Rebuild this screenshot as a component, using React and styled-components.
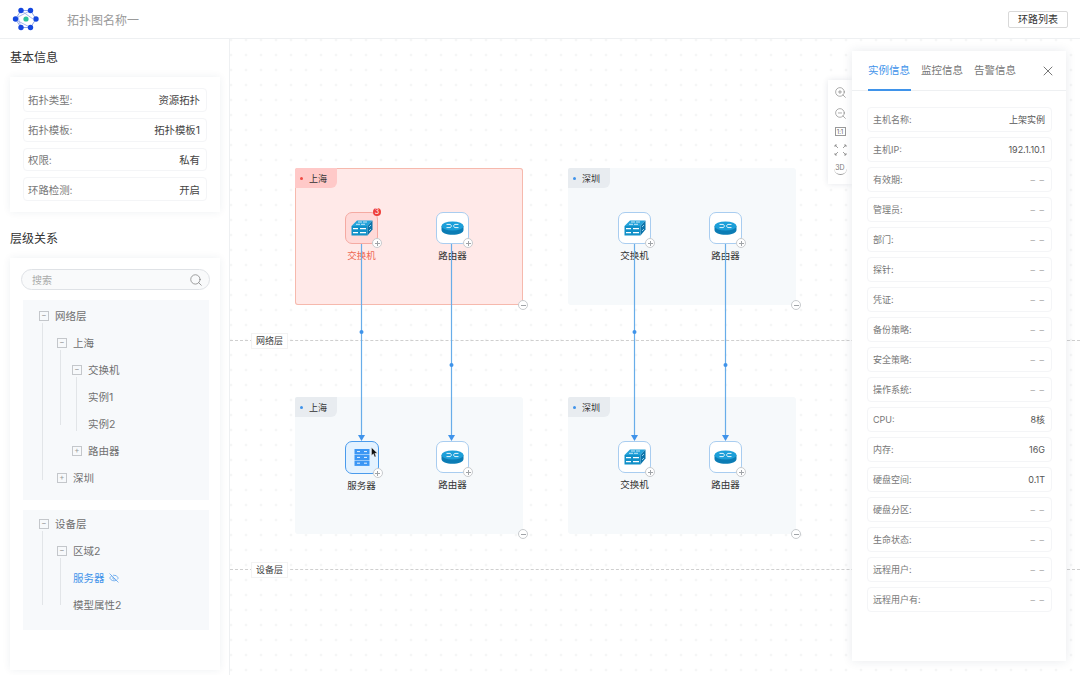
import React from 'react'
import styled, { createGlobalStyle } from 'styled-components'
import { ZoomIn, ZoomOut, X, Search, EyeOff } from 'lucide-react'

const basicInfo = [
  ['拓扑类型:', '资源拓扑'],
  ['拓扑模板:', '拓扑模板1'],
  ['权限:', '私有'],
  ['环路检测:', '开启'],
]

const instanceInfo = [
  ['主机名称:', '上架实例'],
  ['主机IP:', '192.1.10.1'],
  ['有效期:', '– –'],
  ['管理员:', '– –'],
  ['部门:', '– –'],
  ['探针:', '– –'],
  ['凭证:', '– –'],
  ['备份策略:', '– –'],
  ['安全策略:', '– –'],
  ['操作系统:', '– –'],
  ['CPU:', '8核'],
  ['内存:', '16G'],
  ['硬盘空间:', '0.1T'],
  ['硬盘分区:', '– –'],
  ['生命状态:', '– –'],
  ['远程用户:', '– –'],
  ['远程用户有:', '– –'],
]

const groups = [
  { name: '上海', x: 65, y: 129, alert: true, nodes: [{ kind: 'switch', label: '交换机', alert: true }, { kind: 'router', label: '路由器' }] },
  { name: '深圳', x: 338, y: 129, nodes: [{ kind: 'switch', label: '交换机' }, { kind: 'router', label: '路由器' }] },
  { name: '上海', x: 65, y: 358, nodes: [{ kind: 'server', label: '服务器', selected: true }, { kind: 'router', label: '路由器' }] },
  { name: '深圳', x: 338, y: 358, nodes: [{ kind: 'switch', label: '交换机' }, { kind: 'router', label: '路由器' }] },
]

const edges = [
  { x: 131.5, dot: 293 },
  { x: 221.5, dot: 326 },
  { x: 404.5, dot: 293 },
  { x: 495.5, dot: 326 },
]

export default function App() {
  return (
    <>
      <GlobalStyle />
      <Page>
        <Header>
          <HeaderLeft>
            <Logo />
            <MapTitle>拓扑图名称一</MapTitle>
          </HeaderLeft>
          <LoopButton>环路列表</LoopButton>
        </Header>
        <Body>
          <Sidebar>
            <SectionTitle>基本信息</SectionTitle>
            <InfoCard>
              {basicInfo.map(([k, v]) => (
                <InfoRow key={k}>
                  <InfoLabel>{k}</InfoLabel>
                  <InfoValue>{v}</InfoValue>
                </InfoRow>
              ))}
            </InfoCard>
            <SectionTitle $spaced>层级关系</SectionTitle>
            <TreeCard>
              <SearchBox>
                <span>搜索</span>
                <Search size={14} strokeWidth={1.2} color="#777" />
              </SearchBox>
              <TreePanel $top={2} $bottom={9}>
                <TreeRow $depth={0} $open>网络层</TreeRow>
                <TreeGroup $left={19} $bottom={11}>
                  <TreeRow $depth={1} $open>上海</TreeRow>
                  <TreeGroup $left={37} $bottom={39}>
                    <TreeRow $depth={2} $open>交换机</TreeRow>
                    <TreeGroup $left={53} $bottom={6}>
                      <TreeRow $depth={2} $leaf>实例1</TreeRow>
                      <TreeRow $depth={2} $leaf>实例2</TreeRow>
                    </TreeGroup>
                    <TreeRow $depth={2}>路由器</TreeRow>
                  </TreeGroup>
                  <TreeRow $depth={1}>深圳</TreeRow>
                </TreeGroup>
              </TreePanel>
              <TreePanel $top={0} $bottom={12}>
                <TreeRow $depth={0} $open>设备层</TreeRow>
                <TreeGroup $left={19} $bottom={13}>
                  <TreeRow $depth={1} $open>区域2</TreeRow>
                  <TreeGroup $left={37} $bottom={13}>
                    <TreeRow $depth={1} $leaf $active>
                      服务器
                      <EyeOff size={10} strokeWidth={1.6} />
                    </TreeRow>
                    <TreeRow $depth={1} $leaf>模型属性2</TreeRow>
                  </TreeGroup>
                </TreeGroup>
              </TreePanel>
            </TreeCard>
          </Sidebar>

          <Canvas>
            <LayerLine $y={294}><LayerTag>网络层</LayerTag></LayerLine>
            <LayerLine $y={523}><LayerTag>设备层</LayerTag></LayerLine>

            {groups.map((g, i) => (
              <Group key={i} $x={g.x} $y={g.y} $alert={g.alert}>
                <GroupTag $alert={g.alert}>
                  <GroupDot $alert={g.alert} />
                  {g.name}
                </GroupTag>
                {g.nodes.map((n) => (
                  <Node key={n.label}>
                    <NodeBox $alert={n.alert} $selected={n.selected}>
                      {n.kind === 'switch' && <SwitchIcon />}
                      {n.kind === 'router' && <RouterIcon />}
                      {n.kind === 'server' && <ServerIcon />}
                      {n.alert && <AlertBadge>3</AlertBadge>}
                      {n.selected && <Cursor />}
                      <RoundToggle $plus />
                    </NodeBox>
                    <NodeLabel $alert={n.alert}>{n.label}</NodeLabel>
                  </Node>
                ))}
                <RoundToggle />
              </Group>
            ))}

            <EdgeLayer width="850" height="636">
              {edges.map((e) => (
                <g key={e.x}>
                  <line x1={e.x} x2={e.x} y1="205" y2="398" stroke="#68ade9" strokeWidth="1.2" />
                  <circle cx={e.x} cy={e.dot} r="2" fill="#3f93ea" />
                  <path d={`M${e.x - 3.5} 396 L${e.x + 3.5} 396 L${e.x} 402 Z`} fill="#3f93ea" />
                </g>
              ))}
            </EdgeLayer>

            <ToolBar>
              <ZoomIn size={13} strokeWidth={1.1} />
              <ZoomOut size={13} strokeWidth={1.1} />
              <RatioBox>1:1</RatioBox>
              <FitIcon />
              <ThreeD>3D</ThreeD>
            </ToolBar>

            <DetailPanel>
              <Tabs>
                <Tab $active>实例信息</Tab>
                <Tab>监控信息</Tab>
                <Tab>告警信息</Tab>
                <CloseButton><X size={16} strokeWidth={1.1} /></CloseButton>
              </Tabs>
              <DetailList>
                {instanceInfo.map(([k, v]) => (
                  <DetailRow key={k}>
                    <DetailLabel>{k}</DetailLabel>
                    <DetailValue $empty={v === '– –'}>{v}</DetailValue>
                  </DetailRow>
                ))}
              </DetailList>
            </DetailPanel>
          </Canvas>
        </Body>
      </Page>
    </>
  )
}

function Logo() {
  const outer = [[21, 10.5], [30.5, 10.5], [36, 19], [30.5, 27.5], [21, 27.5], [15.5, 19]]
  return (
    <svg width="52" height="38" viewBox="0 0 52 38">
      <path d="M21 10.5H30.5L36 19L30.5 27.5H21L15.5 19Z" fill="none" stroke="#7f9ce8" strokeWidth=".9" />
      <path d="M30.5 10.5L18 17L21 27.5M21 10.5L33 19M18 21L30.5 27.5" fill="none" stroke="#9db2ec" strokeWidth=".9" />
      {outer.map(([x, y]) => <circle key={x + '-' + y} cx={x} cy={y} r="2.7" fill="#1447e0" />)}
      <circle cx="26" cy="19" r="2.6" fill="#2cc39a" />
    </svg>
  )
}

function SwitchIcon() {
  return (
    <svg width="22" height="16" viewBox="0 0 22 16">
      <path d="M6 .5H21.5L16.5 6H.5Z" fill="#25a3da" />
      <path d="M.5 6H16.5V15.5H.5Z" fill="#1190c8" />
      <path d="M16.5 6L21.5 .5V9.5L16.5 15.5Z" fill="#0b74aa" />
      <path d="M7 2H11M12 2H16M5 4.3H9M10 4.3H14" stroke="#d8f1fb" strokeWidth=".9" />
      <path d="M2 8.6H7M9 8.6H15M2 12.6H7M9 12.6H15" stroke="#fff" strokeWidth="1.2" />
      <path d="M18 7L20 5M18 11L20 9" stroke="#bfe6f7" strokeWidth=".8" />
    </svg>
  )
}

function RouterIcon() {
  return (
    <svg width="23" height="14" viewBox="0 0 23 14">
      <path d="M.5 5V9C.5 11.8 5.4 13.8 11.5 13.8S22.5 11.8 22.5 9V5Z" fill="#0b7cb4" />
      <ellipse cx="11.5" cy="5" rx="11" ry="4.6" fill="#1c9fd9" />
      <path d="M5.5 3.4H9L10.6 4.6M17.5 3.4H14L12.4 4.6M5.5 6.6H9L10.6 5.4M17.5 6.6H14L12.4 5.4" fill="none" stroke="#fff" strokeWidth=".9" />
    </svg>
  )
}

function ServerIcon() {
  return (
    <svg width="16" height="17" viewBox="0 0 16 17">
      {[0, 5.8, 11.6].map((y) => (
        <g key={y}>
          <rect x=".5" y={y} width="15" height="5.3" fill="#3b96f4" />
          <path d={`M3 ${y + 2.6}H6M10 ${y + 2.6}H13`} stroke="#fff" strokeWidth=".9" />
        </g>
      ))}
    </svg>
  )
}

function Cursor() {
  return (
    <CursorArrow width="7" height="11" viewBox="0 0 7 11">
      <path d="M.5 .5V8.5L2.4 6.8L3.6 10L5 9.4L3.8 6.3H6.4Z" fill="#111" stroke="#fff" strokeWidth=".4" />
    </CursorArrow>
  )
}

function FitIcon() {
  return (
    <svg width="13" height="12" viewBox="0 0 13 12" fill="none" stroke="#888" strokeWidth=".8">
      <path d="M1 1L4 4M1 3V1H3M12 1L9 4M12 3V1H10M1 11L4 8M1 9V11H3M12 11L9 8M12 9V11H10" />
    </svg>
  )
}

const GlobalStyle = createGlobalStyle`
  * { box-sizing: border-box; }
  body {
    margin: 0;
    background: #fff;
    font-family: Inter, "Noto Sans CJK SC", sans-serif;
    color: #333;
  }
`

const Page = styled.div`
  width: 1080px;
  height: 675px;
  overflow: hidden;
  display: flex;
  flex-direction: column;
`

const Header = styled.header`
  height: 39px;
  flex: none;
  display: flex;
  align-items: center;
  justify-content: space-between;
  padding-right: 12px;
  border-bottom: 1px solid #eef0f2;
`

const HeaderLeft = styled.div`
  display: flex;
  align-items: center;
  gap: 15px;
`

const MapTitle = styled.div`
  font-size: 12px;
  color: #9a9a9a;
`

const LoopButton = styled.button`
  width: 60px;
  height: 17px;
  padding: 0;
  background: #fff;
  border: 1px solid #d9d9d9;
  border-radius: 2px;
  font: inherit;
  font-size: 10px;
  line-height: 15px;
  color: #333;
`

const Body = styled.div`
  flex: 1;
  display: flex;
  min-height: 0;
`

const Sidebar = styled.aside`
  width: 230px;
  flex: none;
  display: flex;
  flex-direction: column;
  padding: 9px 9px 5px 10px;
  border-right: 1px solid #eef0f2;
`

const SectionTitle = styled.h3`
  margin: ${(p) => (p.$spaced ? '17px' : '0')} 0 9px;
  height: 20px;
  font-size: 12px;
  font-weight: 400;
  line-height: 20px;
  color: #333;
`

const InfoCard = styled.div`
  display: flex;
  flex-direction: column;
  gap: 6px;
  height: 135px;
  padding: 11px 13px;
  box-shadow: 0 0 8px rgba(30, 50, 80, 0.07);
`

const InfoRow = styled.div`
  height: 24px;
  display: flex;
  align-items: center;
  justify-content: space-between;
  padding: 0 6px 0 4px;
  border: 1px solid #f4f5f7;
  border-radius: 4px;
  font-size: 10.4px;
`

const InfoLabel = styled.span`
  color: #777;
`

const InfoValue = styled.span`
  color: #444;
`

const TreeCard = styled.div`
  flex: 1;
  padding: 11px 10px 0 11px;
  box-shadow: 0 0 8px rgba(30, 50, 80, 0.07);
`

const SearchBox = styled.div`
  height: 21px;
  display: flex;
  align-items: center;
  justify-content: space-between;
  padding: 0 6px 0 10px;
  margin-bottom: 10px;
  background: #f9fafb;
  border: 1px solid #dfe2e6;
  border-radius: 11px;
  font-size: 10px;
  color: #aaa;
`

const TreePanel = styled.div`
  margin: 0 1px 10px 2px;
  padding: ${(p) => p.$top}px 0 ${(p) => p.$bottom}px;
  background: #f7f9fb;
`

const TreeGroup = styled.div`
  position: relative;
  &::before {
    content: '';
    position: absolute;
    left: ${(p) => p.$left}px;
    top: -6px;
    bottom: ${(p) => p.$bottom}px;
    width: 1px;
    background: #e2e5e8;
  }
`

const rowIndent = [16, 34, 49]

const TreeRow = styled.div`
  position: relative;
  height: 27px;
  display: flex;
  align-items: center;
  gap: 4px;
  padding-left: ${(p) => rowIndent[p.$depth] + 16}px;
  font-size: 10.5px;
  color: ${(p) => (p.$active ? '#3f93ea' : '#707070')};
  ${(p) => !p.$leaf && `
    &::before {
      content: '${p.$open ? '−' : '+'}';
      position: absolute;
      left: ${rowIndent[p.$depth]}px;
      width: 8px;
      height: 8px;
      border: 1px solid #c4c7cb;
      font-size: 8px;
      line-height: 6px;
      text-align: center;
      color: #999;
    }
  `}
`

const Canvas = styled.main`
  position: relative;
  flex: 1;
  background-color: #fff;
  background-image: radial-gradient(circle, #e6e8ea .8px, transparent 1.1px);
  background-size: 15px 15px;
  background-position: -6.5px -6.5px;
`

const LayerLine = styled.div`
  position: absolute;
  left: 0;
  right: 0;
  top: ${(p) => p.$y}px;
  height: 15px;
  padding-left: 21px;
  display: flex;
  &::before {
    content: '';
    position: absolute;
    left: 0;
    right: 0;
    top: 7px;
    border-top: 1px dashed #cfcfcf;
  }
`

const LayerTag = styled.span`
  position: relative;
  width: 37px;
  height: 16px;
  background: #fff;
  border: 1px solid #f3f3f3;
  font-size: 9px;
  line-height: 14px;
  text-align: center;
  color: #444;
`

const Group = styled.section`
  position: absolute;
  left: ${(p) => p.$x}px;
  top: ${(p) => p.$y}px;
  width: 228px;
  height: 137px;
  display: flex;
  gap: 58px;
  padding: 44px 0 0 50px;
  background: ${(p) => (p.$alert ? '#ffe9e8' : '#f6f9fb')};
  box-shadow: ${(p) => (p.$alert ? 'inset 0 0 0 1px #f6b9ad' : 'none')};
  border-radius: 3px;
`

const GroupTag = styled.div`
  position: absolute;
  left: 0;
  top: 0;
  width: 42px;
  height: 20px;
  display: flex;
  align-items: center;
  gap: 6px;
  padding-left: 5px;
  background: ${(p) => (p.$alert ? '#ffc9c8' : '#e8ecf0')};
  border-radius: 2px 0 6px 0;
  font-size: 9px;
  color: #333;
`

const GroupDot = styled.i`
  width: 3px;
  height: 3px;
  border-radius: 50%;
  background: ${(p) => (p.$alert ? '#f04a43' : '#3f93ea')};
`

const Node = styled.div`
  width: 33px;
  display: flex;
  flex-direction: column;
  align-items: center;
`

const NodeBox = styled.div`
  position: relative;
  width: ${(p) => (p.$selected ? 34 : 33)}px;
  height: ${(p) => (p.$selected ? 33 : 32)}px;
  flex: none;
  display: flex;
  align-items: center;
  justify-content: center;
  background: ${(p) => (p.$alert ? '#ffd9d8' : p.$selected ? '#e3f2ff' : '#fff')};
  border: ${(p) => (p.$selected ? '1.5px solid #4a9bec' : p.$alert ? '1px solid #f5aaa2' : '1px solid #a9cdf0')};
  border-radius: 7px;
`

const NodeLabel = styled.div`
  margin-top: ${5}px;
  font-size: 9.5px;
  line-height: 14px;
  white-space: nowrap;
  color: ${(p) => (p.$alert ? '#ee6a55' : '#333')};
`

const AlertBadge = styled.span`
  position: absolute;
  right: -4px;
  top: -5px;
  width: 8px;
  height: 8px;
  border-radius: 50%;
  background: #ee3f3a;
  font-size: 7px;
  line-height: 8px;
  text-align: center;
  color: #fff;
`

const CursorArrow = styled.svg`
  position: absolute;
  right: 0;
  top: 5px;
`

const RoundToggle = styled.span`
  position: absolute;
  right: -5px;
  bottom: -5px;
  width: 10px;
  height: 10px;
  background: #fff;
  border: 1px solid #c8cbce;
  border-radius: 50%;
  &::before {
    content: '';
    position: absolute;
    left: 1.5px;
    right: 1.5px;
    top: 3.5px;
    height: 1px;
    background: #a0a4a8;
  }
  ${(p) => p.$plus && `
    &::after {
      content: '';
      position: absolute;
      top: 1.5px;
      bottom: 1.5px;
      left: 3.5px;
      width: 1px;
      background: #a0a4a8;
    }
  `}
`

const EdgeLayer = styled.svg`
  position: absolute;
  left: 0;
  top: 0;
  pointer-events: none;
`

const ToolBar = styled.div`
  position: absolute;
  left: 598px;
  top: 41px;
  width: 24px;
  height: 104px;
  display: flex;
  flex-direction: column;
  align-items: center;
  justify-content: space-between;
  padding: 6px 0 9px;
  background: #fff;
  box-shadow: 0 0 6px rgba(30, 50, 80, 0.12);
  color: #777;
`

const RatioBox = styled.span`
  width: 11px;
  height: 9px;
  border: 1px solid #999;
  font-size: 6px;
  line-height: 7px;
  text-align: center;
  color: #666;
`

const ThreeD = styled.span`
  width: 13px;
  height: 12px;
  border-bottom: 1px solid #999;
  border-radius: 0 0 7px 7px;
  font-size: 7px;
  line-height: 10px;
  text-align: center;
  color: #777;
`

const DetailPanel = styled.aside`
  position: absolute;
  left: 622px;
  top: 12px;
  width: 214px;
  height: 610px;
  background: #fff;
  box-shadow: 0 0 10px rgba(30, 50, 80, 0.1);
`

const Tabs = styled.div`
  position: relative;
  height: 40px;
  display: flex;
  gap: 10px;
  padding-left: 16px;
  border-bottom: 1px solid #eef0f2;
`

const Tab = styled.div`
  width: 43px;
  height: 40px;
  font-size: 10.5px;
  line-height: 40px;
  white-space: nowrap;
  color: ${(p) => (p.$active ? '#3f93ea' : '#777')};
  border-bottom: 2px solid ${(p) => (p.$active ? '#3f93ea' : 'transparent')};
`

const CloseButton = styled.span`
  position: absolute;
  right: 10px;
  top: 12px;
  color: #444;
  line-height: 0;
`

const DetailList = styled.div`
  display: flex;
  flex-direction: column;
  gap: 5px;
  padding: 16px 14px 0 15px;
`

const DetailRow = styled.div`
  height: 25px;
  display: flex;
  align-items: center;
  justify-content: space-between;
  padding: 0 6px 0 5px;
  border: 1px solid #f4f5f7;
  border-radius: 4px;
  font-size: 9px;
`

const DetailLabel = styled.span`
  color: #777;
`

const DetailValue = styled.span`
  color: ${(p) => (p.$empty ? '#aaa' : '#555')};
  letter-spacing: ${(p) => (p.$empty ? '1px' : '0')};
`
